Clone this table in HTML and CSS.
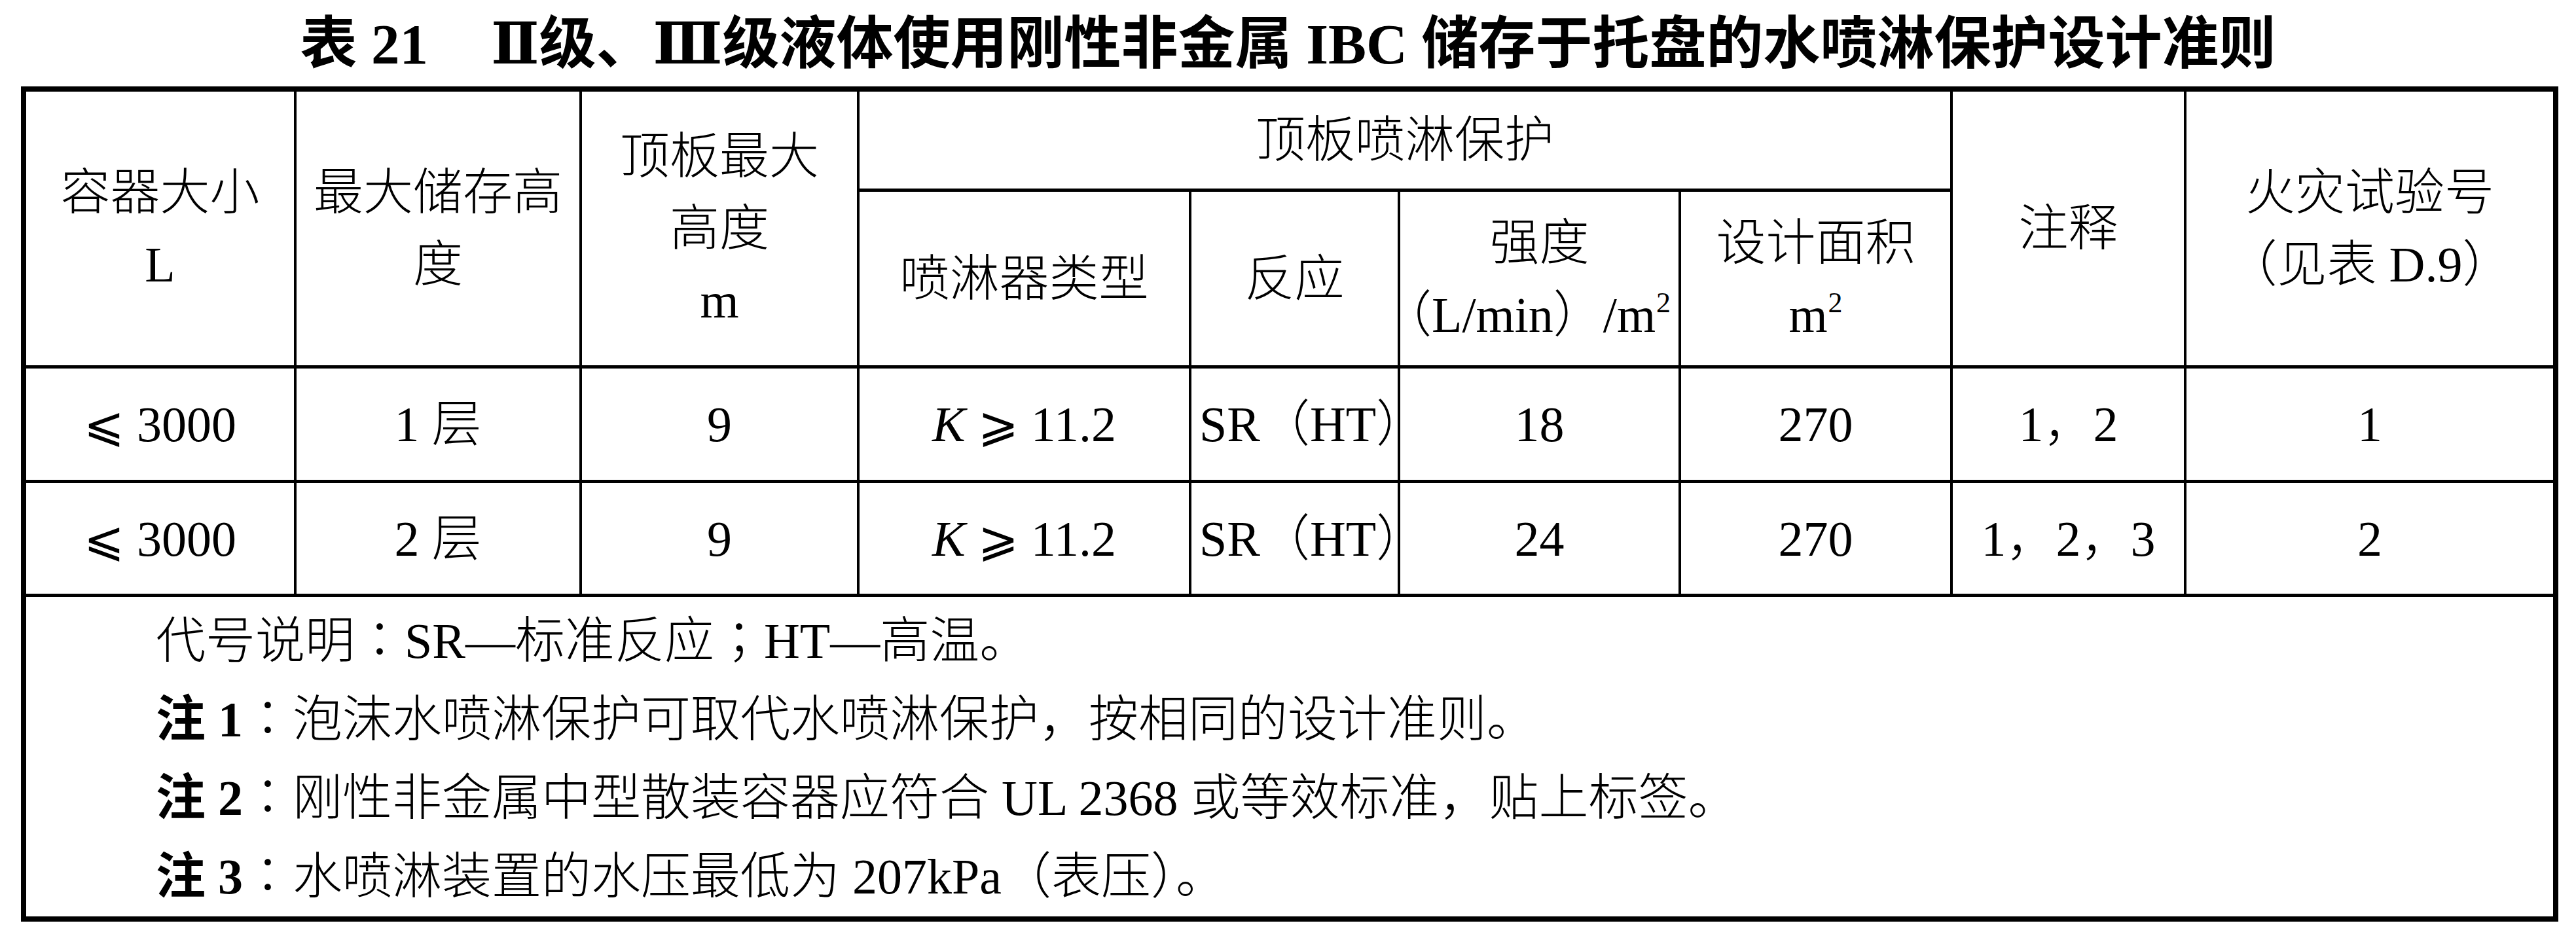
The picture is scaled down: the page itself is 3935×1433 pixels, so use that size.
FILE: index.html
```html
<!DOCTYPE html>
<html lang="zh-CN">
<head>
<meta charset="utf-8">
<title>表 21</title>
<link rel="stylesheet" href="styles.css">
</head>
<body>
<h1 class="title">表 21<span class="gap"></span>Ⅱ级、Ⅲ级液体使用刚性非金属 IBC 储存于托盘的水喷淋保护设计准则</h1>
<table class="spec">
  <colgroup>
    <col class="c1"><col class="c2"><col class="c3"><col class="c4"><col class="c5"><col class="c6"><col class="c7"><col class="c8"><col class="c9">
  </colgroup>
  <thead>
    <tr class="h1">
      <th rowspan="2">容器大小<br>L</th>
      <th rowspan="2">最大储存高<br>度</th>
      <th rowspan="2">顶板最大<br>高度<br>m</th>
      <th colspan="4">顶板喷淋保护</th>
      <th rowspan="2">注释</th>
      <th rowspan="2" class="last">火灾试验号<br>（见表 D.9）</th>
    </tr>
    <tr class="h2">
      <th>喷淋器类型</th>
      <th>反应</th>
      <th>强度<br><span class="unit">（L/min）/m<sup class="sq">2</sup></span></th>
      <th>设计面积<br>m<sup class="sq">2</sup></th>
    </tr>
  </thead>
  <tbody>
    <tr class="r1">
      <td><span class="le">⩽</span> 3000</td>
      <td>1 层</td>
      <td>9</td>
      <td><i>K</i> <span class="le">⩾</span> 11.2</td>
      <td class="left">SR（HT）</td>
      <td>18</td>
      <td>270</td>
      <td>1，2</td>
      <td class="last">1</td>
    </tr>
    <tr class="r2">
      <td><span class="le">⩽</span> 3000</td>
      <td>2 层</td>
      <td>9</td>
      <td><i>K</i> <span class="le">⩾</span> 11.2</td>
      <td class="left">SR（HT）</td>
      <td>24</td>
      <td>270</td>
      <td>1，2，3</td>
      <td class="last">2</td>
    </tr>
    <tr class="notes">
      <td colspan="9" class="last">
        <div class="note">代号说明<span class="cp" lang="zh-TW">：</span>SR—标准反应<span class="cp" lang="zh-TW">；</span>HT—高温。</div>
        <div class="note"><b>注 1</b><span class="cp" lang="zh-TW">：</span>泡沫水喷淋保护可取代水喷淋保护，按相同的设计准则。</div>
        <div class="note"><b>注 2</b><span class="cp" lang="zh-TW">：</span>刚性非金属中型散装容器应符合 UL 2368 或等效标准，贴上标签。</div>
        <div class="note"><b>注 3</b><span class="cp" lang="zh-TW">：</span>水喷淋装置的水压最低为 207kPa（表压）。</div>
      </td>
    </tr>
  </tbody>
</table>
</body>
</html>
```

FILE: styles.css
```css
html, body {
  margin: 0;
  padding: 0;
  background: #fff;
}

body {
  width: 3935px;
  height: 1433px;
  overflow: hidden;
  color: #000;
  font-family: "Liberation Serif", "DejaVu Serif", "Noto Sans CJK SC", "DejaVu Sans", serif;
}

.title {
  margin: 0;
  padding-top: 4px;
  height: 128px;
  line-height: 128px;
  font-size: 87px;
  font-weight: 700;
  text-align: center;
  white-space: nowrap;
}

.title .gap {
  display: inline-block;
  width: 96px;
}

.spec {
  box-sizing: border-box;
  margin-left: 32px;
  width: 3876px;
  table-layout: fixed;
  border-collapse: separate;
  border-spacing: 0;
  border: 8px solid #000;
}

.c1 { width: 413px; }
.c2 { width: 436px; }
.c3 { width: 424px; }
.c4 { width: 507px; }
.c5 { width: 319px; }
.c6 { width: 429px; }
.c7 { width: 415px; }
.c8 { width: 357px; }
.c9 { width: 560px; }

.spec th,
.spec td {
  padding: 0;
  border-right: 4px solid #000;
  border-bottom: 5px solid #000;
  text-align: center;
  vertical-align: middle;
  font-size: 76px;
  line-height: 110px;
  font-weight: 300;
  white-space: nowrap;
  overflow: visible;
}

.spec .last {
  border-right: none;
}

.h1 { height: 153px; }
.h2 { height: 270px; }
.r1 { height: 175px; }
.r2 { height: 174px; }
.notes { height: 488px; }

.spec td.left {
  text-align: left;
  padding-left: 12px;
}

.le {
  font-family: "DejaVu Serif", "DejaVu Sans", serif;
  font-size: 74px;
}

.spec i {
  font-style: italic;
}

.unit {
  display: inline-block;
  margin-left: -40px;
  line-height: 110px;
}

.sq {
  font-size: 44px;
  line-height: 0;
  vertical-align: 30px;
  margin-left: 1px;
}

.notes td {
  border-bottom: none;
  text-align: left;
  padding-left: 198px;
  line-height: 113px;
}

.note b {
  font-weight: 700;
}

.cp {
  font-family: "Noto Sans CJK TC", "Noto Sans CJK SC", sans-serif;
}
```
